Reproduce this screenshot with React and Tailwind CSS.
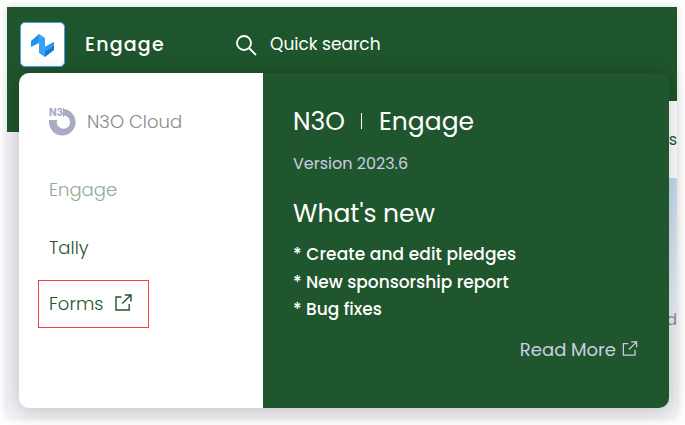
import React from "react";

function ExternalIcon({ className }) {
  return (
    <svg className={className} viewBox="0 0 17 17" fill="none" stroke="currentColor" strokeWidth="1.4">
      <path d="M6.5 3H1v13h13.2v-6" />
      <path d="M7.2 9.6 16 1M9.8 1H16v6.4" />
    </svg>
  );
}

function AppMark() {
  return (
    <svg className="h-[24px] w-[24px]" viewBox="0 0 24 24">
      <path d="M0 8 8 1v9L0 14z" fill="#2490ee" />
      <path d="M8 1l6 4v19l-6-4z" fill="#3ba0f8" />
      <path d="M14 14l9-5v8l-9 7z" fill="#1478d4" />
      <path d="M14 14l9-5v4l-9 6z" fill="#3096f0" />
    </svg>
  );
}

function CloudMark() {
  return (
    <svg className="h-[28px] w-[28px] shrink-0" viewBox="0 0 28 28">
      <path d="M0 12h8.2a6.6 6.6 0 1 0 6.8-4.4V1A13.3 13.3 0 1 1 0 13.500z" fill="#a9abc4" />
      <text x="0" y="8" fontSize="10" fontWeight="800" fill="#a9abc4" fontFamily="Inter, sans-serif" textLength="14">N3</text>
      <path d="M14 0h1v9h-1z" fill="#a9abc4" />
    </svg>
  );
}

const notes = [
  ["* Create and edit pledges", "tracking-[0.1px]"],
  ["* New sponsorship report", "tracking-[0px]"],
  ["* Bug fixes", "tracking-[0px]"],
];

export default function App() {
  return (
    <div className="relative h-[425px] w-[685px] overflow-hidden bg-white p-[7px] font-['Poppins','Inter',sans-serif] leading-none whitespace-nowrap">
      <div className="h-[410px] w-[670px] bg-[#f1f1f6] shadow-[0_0_9px_rgba(0,0,0,0.15)]">
        <div className="flex h-full">
          <div className="flex w-[650px] flex-col">
            <header className="flex h-[125px] items-start bg-[#1f552c] pt-[15px] pl-[13px] text-white">
              <div className="flex h-[45px] w-[45px] shrink-0 items-center justify-center rounded-[5px] border border-[#44a0f5] bg-white">
                <AppMark />
              </div>
              <div className="ml-[20px] flex h-[45px] w-[151px] items-center text-[19px] font-medium tracking-[1.2px]">Engage</div>
              <svg className="mt-[13px] h-[21px] w-[21px] shrink-0" viewBox="0 0 21 21" fill="none" stroke="white" strokeWidth="1.8">
                <circle cx="8" cy="8" r="7" />
                <path d="m13 13 7 7" />
              </svg>
              <div className="ml-[13px] flex h-[45px] items-center text-[17px]">Quick search</div>
            </header>
          </div>
          <div className="flex w-[20px] flex-col overflow-hidden bg-[#e4e9f1]">
            <div className="h-[94px] shrink-0 bg-[#1f552c]" />
            <div className="flex h-[77px] shrink-0 items-center justify-end bg-white text-[16px] text-[#1f552c]">rs</div>
            <div className="flex grow justify-end bg-linear-to-b from-[#c5dbef] to-[#eef2f5] to-60% pt-[134px] text-[16px] text-[#8a8da3]">d</div>
          </div>
        </div>
      </div>
      <section className="absolute top-[73px] left-[19px] flex h-[335px] w-[650px] overflow-hidden rounded-[10px] shadow-[0_2px_20px_rgba(0,0,0,0.22)]">
        <nav className="flex w-[244px] flex-col bg-white pt-[35px] pl-[30px] text-[18px] font-light text-[#1f552c]">
          <div className="flex h-[28px] items-center gap-[10px] text-[#8a8a8a]">
            <CloudMark />
            <span>N3O Cloud</span>
          </div>
          <div className="mt-[40px] flex h-[28px] items-center text-[#8faa95]">Engage</div>
          <div className="mt-[30px] flex h-[28px] items-center">Tally</div>
          <div className="mt-[18px] -ml-[11px] flex h-[48px] w-[111px] items-center gap-[11px] border border-[#f43d3d] pl-[10px]">
            <span>Forms</span>
            <ExternalIcon className="mb-[3px] h-[17px] w-[17px]" />
          </div>
        </nav>
        <div className="flex w-[406px] flex-col bg-[#20562d] pt-[33px] pr-[31px] pl-[30px] text-white">
          <div className="flex h-[30px] items-center text-[25px]">
            <span className="w-[68px]">N3O</span>
            <span className="h-[16px] w-px bg-white" />
            <span className="ml-[17px]">Engage</span>
          </div>
          <div className="mt-[18px] flex h-[20px] items-center text-[16px] text-[#cbcee2]">Version 2023.6</div>
          <h2 className="mt-[24px] flex h-[30px] items-center text-[25px]">What's new</h2>
          <div className="mt-[13px] flex flex-col text-[17px] font-medium">
            {notes.map(([note, tracking]) => (
              <div key={note} className={`flex h-[27.5px] items-center ${tracking}`}>{note}</div>
            ))}
          </div>
          <div className="mt-[14px] flex h-[24px] items-center justify-end gap-[6px] text-[18px] text-[#cbcee2]">
            <span>Read More</span>
            <ExternalIcon className="mb-[2px] h-[15px] w-[16px]" />
          </div>
        </div>
      </section>
    </div>
  );
}
